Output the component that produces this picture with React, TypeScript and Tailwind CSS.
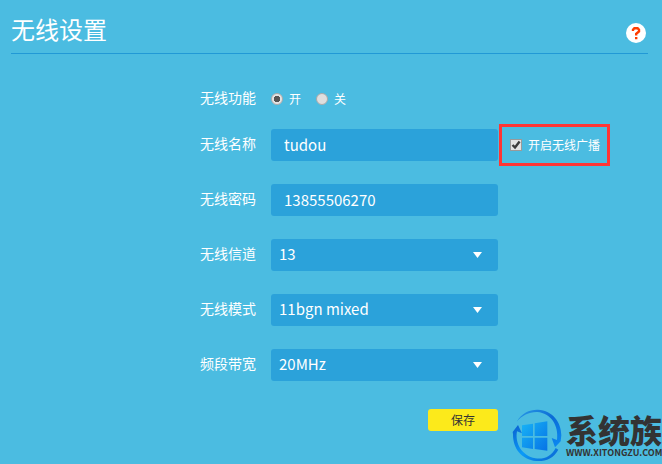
import type { ReactNode } from 'react';

const channels = ['13', '1', '6', '11'];
const modes = ['11bgn mixed', '11bg mixed', '11n only'];
const bandwidths = ['20MHz', '40MHz'];

const fieldClass =
  'h-8 w-[227px] rounded-[3px] bg-[#2ba2da] text-[15px] text-white outline-none';

function Row({ label, htmlFor, children }: { label: string; htmlFor?: string; children: ReactNode }) {
  return (
    <div className="flex items-center">
      <label htmlFor={htmlFor} className="mr-[15px] w-64 shrink-0 pb-1 text-right text-sm">
        {label}
      </label>
      {children}
    </div>
  );
}

function TextField({ id, value }: { id: string; value: string }) {
  return <input id={id} type="text" defaultValue={value} className={`${fieldClass} px-[13px] pb-0.5`} />;
}

function SelectField({ id, options }: { id: string; options: string[] }) {
  return (
    <div className="relative">
      <select id={id} className={`${fieldClass} block appearance-none px-2 pb-0.5`}>
        {options.map((option) => (
          <option key={option}>{option}</option>
        ))}
      </select>
      <svg
        aria-hidden
        viewBox="0 0 9 6"
        className="pointer-events-none absolute top-[13px] right-4 h-1.5 w-[9px] fill-white"
      >
        <path d="M0 0h9L4.5 6z" />
      </svg>
    </div>
  );
}

function Radio({ label, checked }: { label: string; checked?: boolean }) {
  return (
    <label className="flex items-center gap-1.5 text-xs">
      <input
        type="radio"
        name="wireless"
        defaultChecked={checked}
        className="h-3 w-3 appearance-none rounded-full border border-[#a9a9a9] bg-[#dedede] checked:bg-[radial-gradient(circle,#555_0_3px,#e4e4e4_3px)]"
      />
      {label}
    </label>
  );
}

function BroadcastOption() {
  return (
    <label className="-my-[5px] ml-px flex h-[42px] w-[111px] items-center gap-1.5 border-3 border-[#ff3535] pl-2 text-xs whitespace-nowrap">
      <span className="relative h-3 w-3">
        <input
          type="checkbox"
          defaultChecked
          className="peer block h-3 w-3 appearance-none border border-[#9a9a9a] bg-[#e2e2e2]"
        />
        <svg
          aria-hidden
          viewBox="0 0 12 12"
          className="pointer-events-none absolute inset-0 hidden fill-none stroke-[#3a3a3a] stroke-[2.4] peer-checked:block"
        >
          <path d="M2.5 6 5 8.4 9.6 2.6" />
        </svg>
      </span>
      开启无线广播
    </label>
  );
}

function Watermark() {
  return (
    <div className="pointer-events-none absolute right-0 bottom-0 flex items-end text-[#333]">
      <svg aria-hidden viewBox="0 0 174 174" className="h-[58px] w-[58px]">
        <defs>
          <linearGradient id="ring-top" x1="0" y1="0" x2="1" y2="1">
            <stop offset="0" stopColor="#2a9be6" />
            <stop offset="0.5" stopColor="#0b6bd6" />
            <stop offset="1" stopColor="#0a8cf5" />
          </linearGradient>
          <linearGradient id="ring-bottom" x1="0" y1="0" x2="1" y2="1">
            <stop offset="0" stopColor="#0a5fd0" />
            <stop offset="0.5" stopColor="#0a9bf8" />
            <stop offset="1" stopColor="#0a62d0" />
          </linearGradient>
          <linearGradient id="panes" x1="0" y1="0" x2="1" y2="1">
            <stop offset="0" stopColor="#18b4f6" />
            <stop offset="1" stopColor="#0673e6" />
          </linearGradient>
        </defs>
        <path
          fill="url(#ring-top)"
          d="M26 47C42 20 66 10 90 11C134 14 160 48 160 88L158 106 141 124 131 96 147 102C153 58 128 21 88 18C64 17 43 28 26 47Z"
        />
        <path
          fill="url(#ring-bottom)"
          d="M14 78 30 57 42 82 27 76C20 112 42 150 82 157C108 161 130 151 143 126L151 131C136 158 112 167 84 165C42 161 14 128 15 84Z"
        />
        <path
          fill="url(#panes)"
          d="M42 58 75 53V90H42ZM80 52 118 46V90H80ZM42 95H75V129L42 124ZM80 95H118V134L80 129Z"
        />
      </svg>
      <div className="w-24 pb-[5px] whitespace-nowrap">
        <div className="mb-0.5 text-[32px] leading-8 font-black">系统族</div>
        <div className="text-[9px] leading-3 font-bold">WWW.XITONGZU.COM</div>
      </div>
    </div>
  );
}

export default function App() {
  return (
    <main className="relative min-h-screen bg-[#4bbce1] pr-3.5 pl-[11px] font-['Noto_Sans_CJK_SC',sans-serif] text-white">
      <header className="flex items-center justify-between border-b border-[#2199d6] pt-[11px] pr-0.5 pb-1.5">
        <h1 className="text-2xl leading-9">无线设置</h1>
        <button
          type="button"
          aria-label="帮助"
          className="mt-2 flex h-5 w-5 items-center justify-center rounded-full bg-white"
        >
          <svg aria-hidden viewBox="0 0 20 20" className="h-5 w-5 fill-none stroke-[#ff3c00] stroke-[2.4]">
            <path d="M7 8V6.8L8.4 5.2H11.6L13 6.7V8.4L10.2 10.8V12.6M10.2 14V16.2" />
          </svg>
        </button>
      </header>

      <form className="-ml-[11px] flex flex-col gap-[23px] pt-[33px]" onSubmit={(e) => e.preventDefault()}>
        <div className="-mb-[5px]">
          <Row label="无线功能">
            <div className="flex gap-[15px]">
              <Radio label="开" checked />
              <Radio label="关" />
            </div>
          </Row>
        </div>
        <Row label="无线名称" htmlFor="ssid">
          <TextField id="ssid" value="tudou" />
          <BroadcastOption />
        </Row>
        <Row label="无线密码" htmlFor="password">
          <TextField id="password" value="13855506270" />
        </Row>
        <Row label="无线信道" htmlFor="channel">
          <SelectField id="channel" options={channels} />
        </Row>
        <Row label="无线模式" htmlFor="mode">
          <SelectField id="mode" options={modes} />
        </Row>
        <Row label="频段带宽" htmlFor="bandwidth">
          <SelectField id="bandwidth" options={bandwidths} />
        </Row>
        <div className="mt-[5px] ml-[271px] flex w-[227px] justify-end">
          <button type="submit" className="h-[22px] w-[70px] rounded-[3px] bg-[#fcea1b] text-xs text-[#333]">
            保存
          </button>
        </div>
      </form>

      <Watermark />
    </main>
  );
}
